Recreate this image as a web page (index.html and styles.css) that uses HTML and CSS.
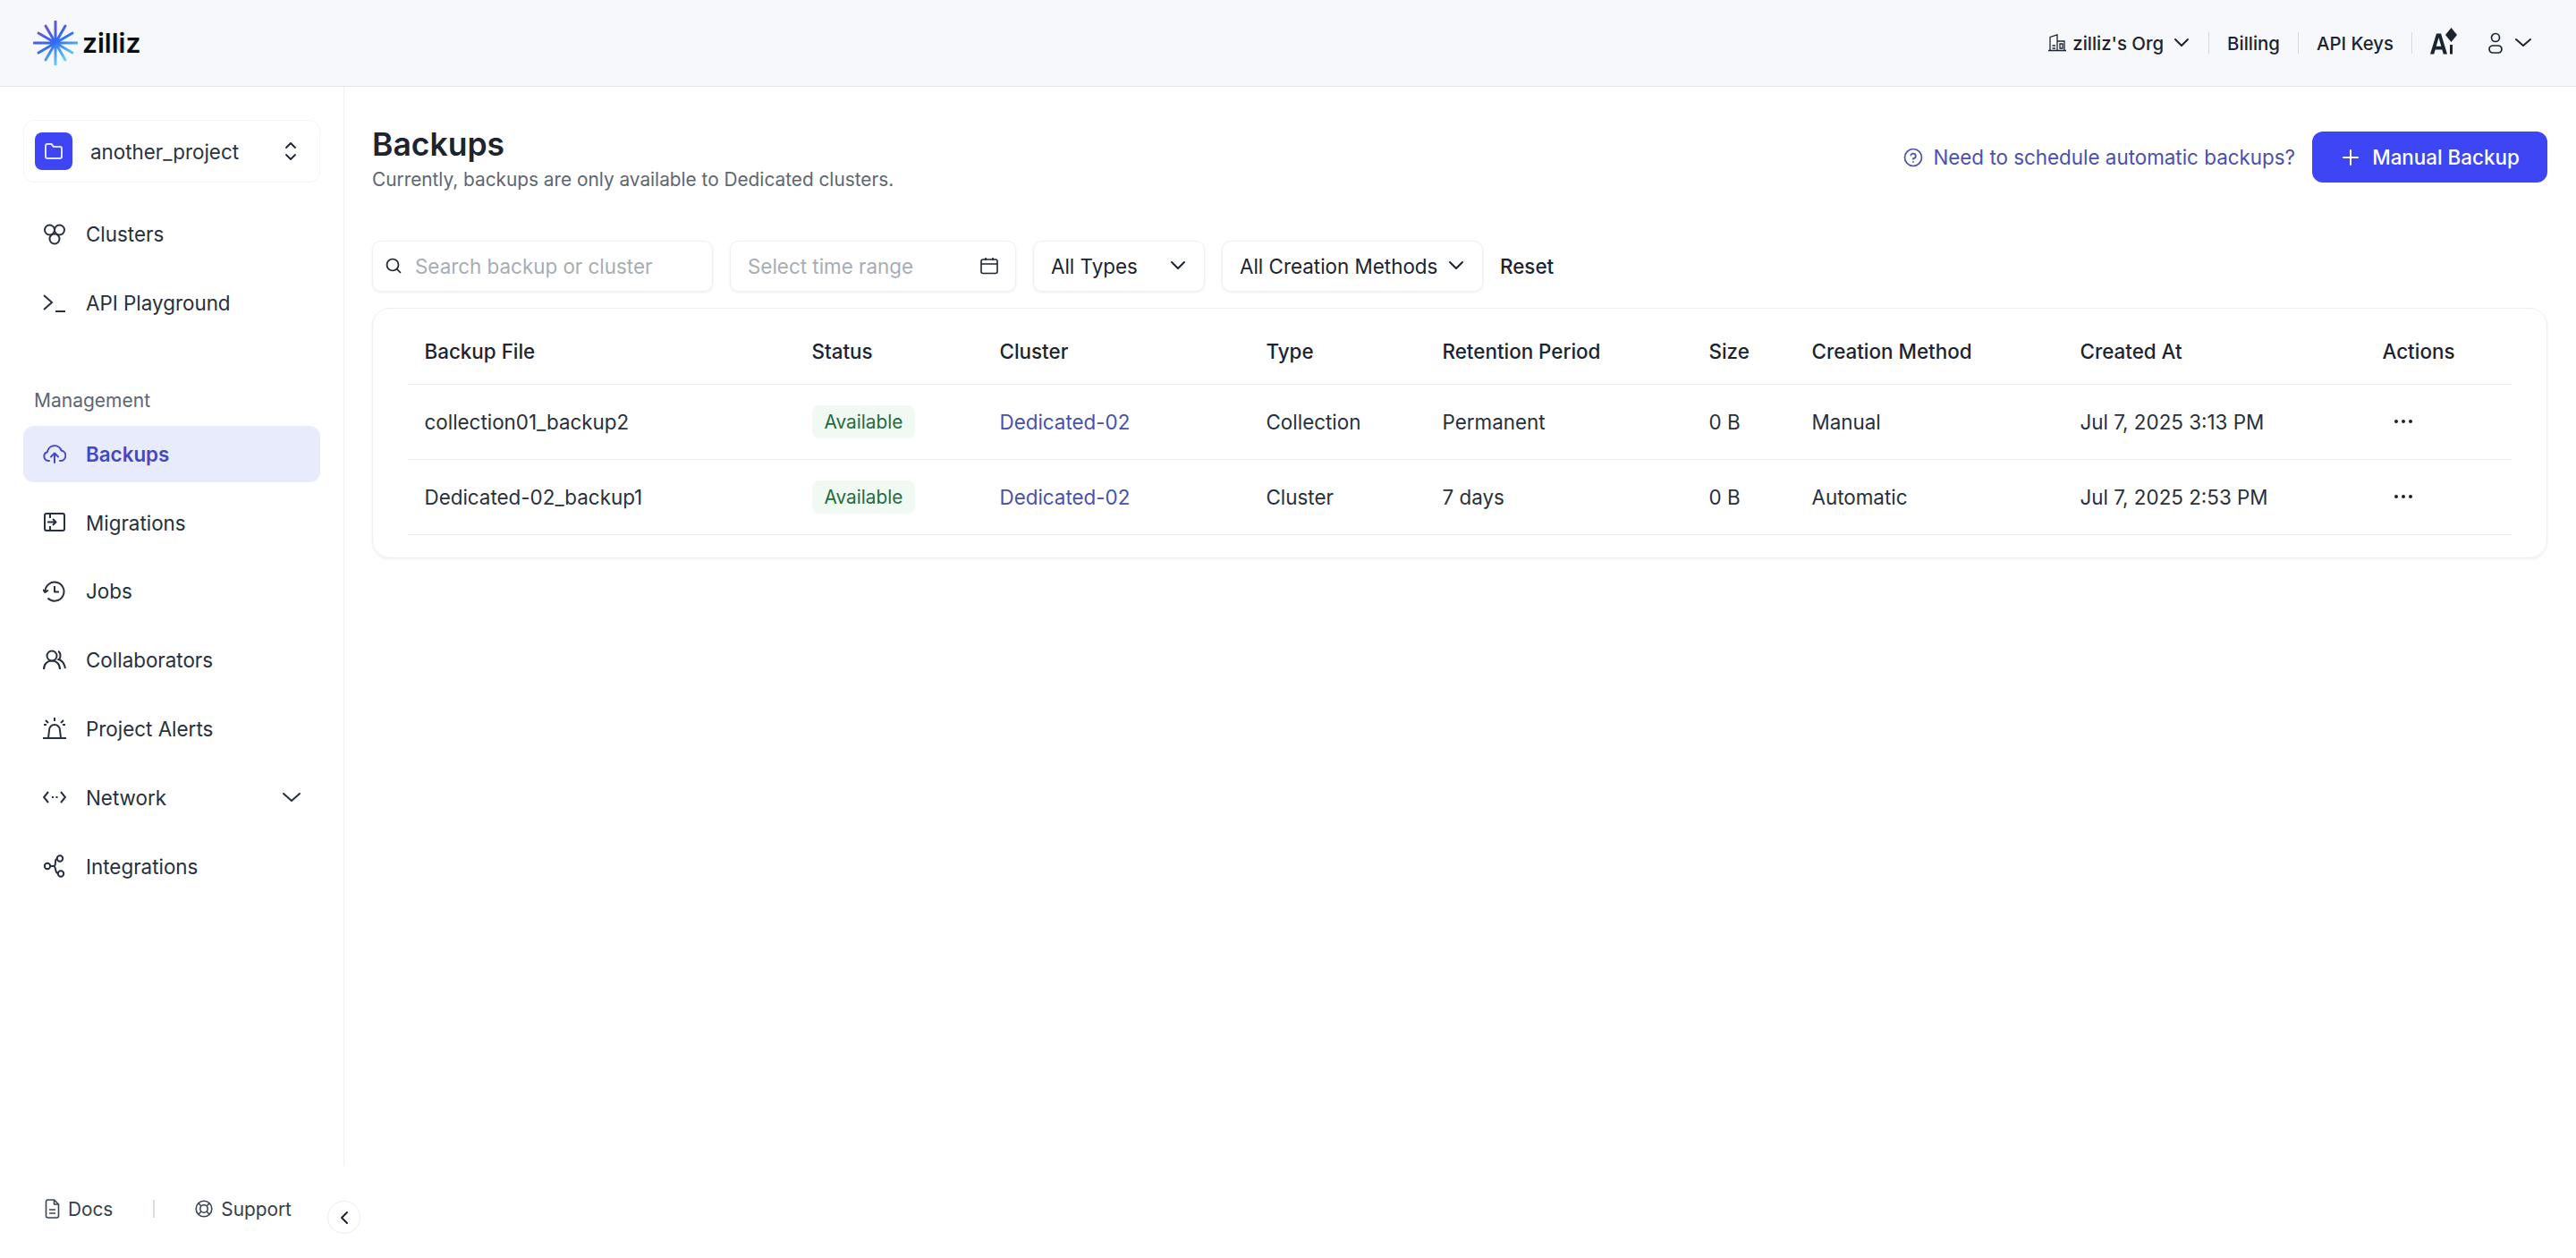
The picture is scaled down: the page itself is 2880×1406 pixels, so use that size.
FILE: index.html
```html
<!DOCTYPE html>
<html lang="en">
  <head>
    <meta charset="UTF-8" />
    <meta name="viewport" content="width=device-width, initial-scale=1.0" />
    <title>Backups</title>
    <link rel="stylesheet" href="styles.css">
  </head>
  <body>
    <svg class="defs" width="0" height="0">
      <defs>
        <linearGradient id="star" gradientUnits="userSpaceOnUse" x1="8" y1="4" x2="34" y2="48">
          <stop offset="0" stop-color="#7a4fc8" />
          <stop offset="0.5" stop-color="#2f6bf5" />
          <stop offset="1" stop-color="#6fdcee" />
        </linearGradient>
      </defs>
    </svg>

    <!-- Top bar -->
    <header class="topbar">
      <div class="logo">
        <svg class="logo-mark" width="50" height="50" viewBox="0 0 50 50" fill="none" stroke="url(#star)" stroke-width="3" stroke-linecap="round">
          <path d="M25 1V49M1 25H49" />
          <path d="M14 6L36 44M36 6L14 44" />
          <path d="M6 14L44 36M44 14L6 36" />
          <circle cx="25" cy="25" r="6" fill="url(#star)" stroke="none" />
        </svg>
        <span class="logo-text">zilliz</span>
      </div>
      <nav class="top-links">
        <a class="top-org">
          <svg width="20" height="20" viewBox="0 0 20 20" fill="none" stroke="#1b2430" stroke-width="1.300"><path d="M0 18.500H20M2 18V3.500L10 1V18M10 8H18V18M4.500 13H8M4.500 16H8M13 11V16H16V11Z" /></svg>
          <span>zilliz's Org</span>
          <svg class="chev" width="20" height="12" viewBox="0 0 20 12" fill="none" stroke="#1b2430" stroke-width="2" stroke-linecap="round" stroke-linejoin="round"><path d="M3 2L10 9L17 2" /></svg>
        </a>
        <i class="top-sep"></i>
        <a>Billing</a>
        <i class="top-sep"></i>
        <a>API Keys</a>
        <i class="top-sep"></i>
        <svg class="ai-icon" width="30" height="30" viewBox="0 0 30 30" fill="#1b2430">
          <path d="M0 29.500L7 6.500H12L19 29.500H14.800L13.300 24.500H5.700L4.200 29.500ZM6.700 20.800H12.300L9.500 11Z" />
          <path d="M23.500 0L30 8L23.500 16L17 8Z" />
          <rect x="22" y="19" width="3" height="10.500" />
        </svg>
        <a class="top-user">
          <svg width="16" height="26" viewBox="0 0 16 26" fill="none" stroke="#1b2430" stroke-width="1.700"><circle cx="8" cy="7" r="4.500" /><rect x="1" y="16" width="14" height="8" rx="4" /></svg>
          <svg class="chev" width="20" height="12" viewBox="0 0 20 12" fill="none" stroke="#1b2430" stroke-width="2" stroke-linecap="round" stroke-linejoin="round"><path d="M2 2L10 9L18 2" /></svg>
        </a>
      </nav>
    </header>

    <div class="layout">
      <!-- Sidebar -->
      <aside class="sidebar">
        <div class="side-body">
          <div class="project">
            <span class="project-icon">
              <svg width="22" height="20" viewBox="0 0 22 20" fill="none" stroke="#dfe3ff" stroke-width="2" stroke-linejoin="round"><path d="M2 4A2 2 0 0 1 4 2H8.500L11 5H18A2 2 0 0 1 20 7V16A2 2 0 0 1 18 18H4A2 2 0 0 1 2 16Z" /></svg>
            </span>
            <span class="project-name">another_project</span>
            <svg width="14" height="22" viewBox="0 0 14 22" fill="none" stroke="#1b2430" stroke-width="1.800" stroke-linecap="round" stroke-linejoin="round"><path d="M2 7L7 2L12 7M2 15L7 20L12 15" /></svg>
          </div>

          <ul class="nav">
            <li class="nav-item">
              <svg class="nav-icon" viewBox="0 0 26 26" fill="none" stroke="currentColor" stroke-width="2"><circle cx="7.500" cy="8" r="5.500" /><circle cx="18.500" cy="8" r="5.500" /><circle cx="13" cy="18" r="5.500" /></svg>
              Clusters
            </li>
            <li class="nav-item">
              <svg class="nav-icon" viewBox="0 0 26 26" fill="none" stroke="currentColor" stroke-width="2"><path d="M1 5L10 13L1 21M14 23H25" /></svg>
              API Playground
            </li>
          </ul>

          <div class="nav-label">Management</div>
          <ul class="nav">
            <li class="nav-item active">
              <svg class="nav-icon" viewBox="0 0 26 26" fill="none" stroke="currentColor" stroke-width="2" stroke-linecap="round" stroke-linejoin="round"><path d="M7 21H6A5 5 0 0 1 5 11.200A8 8 0 0 1 20.500 9.500A5.800 5.800 0 0 1 20 21H19M13 23V13M9 16.500L13 12.500L17 16.500" /></svg>
              Backups
            </li>
            <li class="nav-item">
              <svg class="nav-icon" viewBox="0 0 26 26" fill="none" stroke="currentColor" stroke-width="2" stroke-linejoin="round"><rect x="2" y="3" width="22" height="19" rx="2" /><path d="M8 3V8M8 17V22M5 12.500H14M11 9L14.500 12.500L11 16" /></svg>
              Migrations
            </li>
            <li class="nav-item">
              <svg class="nav-icon" viewBox="0 0 26 26" fill="none" stroke="currentColor" stroke-width="2" stroke-linejoin="round"><path d="M2.500 13A10.500 10.500 0 1 1 5.500 20.500M0 11L2.500 14L6 11.500M13 7V13.500H18" /></svg>
              Jobs
            </li>
            <li class="nav-item">
              <svg class="nav-icon" viewBox="0 0 26 26" fill="none" stroke="currentColor" stroke-width="2"><circle cx="10" cy="8" r="5.500" /><path d="M1 23C1 17 5 13.500 10 13.500S19 17 19 23M17 3C20 4 20.500 10 17.500 12C21 13 24 17 25 22" /></svg>
              Collaborators
            </li>
            <li class="nav-item">
              <svg class="nav-icon" viewBox="0 0 26 26" fill="none" stroke="currentColor" stroke-width="2"><path d="M0 24H26M6 24L7 15A6 6 0 0 1 19 15L20 24M13 1V5M3 4L6 7M23 4L20 7M1 9H4M22 9H25" /></svg>
              Project Alerts
            </li>
            <li class="nav-item">
              <svg class="nav-icon" viewBox="0 0 26 26" fill="none" stroke="currentColor" stroke-width="2"><path d="M6 7L1 13L6 19M20 7L25 13L20 19M10 13H12M14.500 13H16.500" /></svg>
              Network
              <svg class="nav-chev" width="24" height="14" viewBox="0 0 24 14" fill="none" stroke="currentColor" stroke-width="2" stroke-linecap="round" stroke-linejoin="round"><path d="M3 3L12 11L21 3" /></svg>
            </li>
            <li class="nav-item">
              <svg class="nav-icon" viewBox="0 0 26 26" fill="none" stroke="currentColor" stroke-width="2"><circle cx="5" cy="13" r="3.200" /><circle cx="19" cy="4.500" r="3.200" /><circle cx="20" cy="21.500" r="3.200" /><path d="M8 13H12C14 13 14 9 14 8C14 6 15 5 16 5M12 13C14 13 14 17 14.500 18.500C15 20 16 21 17 21" /></svg>
              Integrations
            </li>
          </ul>
        </div>

        <div class="side-foot">
          <a class="foot-link">
            <svg width="17" height="22" viewBox="0 0 17 22" fill="none" stroke="#3a4452" stroke-width="1.600" stroke-linejoin="round"><path d="M1.500 3A2 2 0 0 1 3.500 1H10.500L15.500 6V19A2 2 0 0 1 13.500 21H3.500A2 2 0 0 1 1.500 19ZM10.500 1V6H15.500M5 12H12M5 16H12" /></svg>
            Docs
          </a>
          <i class="foot-sep"></i>
          <a class="foot-link">
            <svg width="20" height="20" viewBox="0 0 20 20" fill="none" stroke="#3a4452" stroke-width="1.600"><circle cx="10" cy="10" r="8.800" /><circle cx="10" cy="10" r="4.200" /><path d="M3.800 3.800L7 7M16.200 3.800L13 7M3.800 16.200L7 13M16.200 16.200L13 13" /></svg>
            Support
          </a>
        </div>
        <button class="collapse">
          <svg width="10" height="16" viewBox="0 0 10 16" fill="none" stroke="#1b2430" stroke-width="2" stroke-linecap="round" stroke-linejoin="round"><path d="M8 2L2 8L8 14" /></svg>
        </button>
      </aside>

      <!-- Main content -->
      <main class="main">
        <div class="page-head">
          <div>
            <h1>Backups</h1>
            <p>Currently, backups are only available to Dedicated clusters.</p>
          </div>
          <div class="head-actions">
            <a class="help-link">
              <svg width="22" height="22" viewBox="0 0 22 22" fill="none" stroke="#4a4fb0" stroke-width="1.700" stroke-linecap="round"><circle cx="11" cy="11" r="9.500" /><path d="M8.300 8.600A2.800 2.800 0 1 1 11 12.200V12.800M11 15.800V16" /></svg>
              Need to schedule automatic backups?
            </a>
            <button class="primary-btn">
              <svg width="18" height="18" viewBox="0 0 18 18" fill="none" stroke="#fff" stroke-width="2" stroke-linecap="round"><path d="M9 1V17M1 9H17" /></svg>
              Manual Backup
            </button>
          </div>
        </div>

        <div class="filters">
          <div class="field field-search">
            <svg width="18" height="18" viewBox="0 0 18 18" fill="none" stroke="#1b2430" stroke-width="1.700" stroke-linecap="round"><circle cx="8" cy="8" r="6.500" /><path d="M13 13L16.500 16.500" /></svg>
            <span class="placeholder">Search backup or cluster</span>
          </div>
          <div class="field field-date">
            <span class="placeholder">Select time range</span>
            <svg width="20" height="20" viewBox="0 0 20 20" fill="none" stroke="#1b2430" stroke-width="1.600"><rect x="1" y="3" width="18" height="15.500" rx="2" /><path d="M1 8H19M6 1V4M14 1V4" /></svg>
          </div>
          <div class="field field-types">
            <span>All Types</span>
            <svg class="chev" width="20" height="12" viewBox="0 0 20 12" fill="none" stroke="#1b2430" stroke-width="2" stroke-linecap="round" stroke-linejoin="round"><path d="M3 2L10 9L17 2" /></svg>
          </div>
          <div class="field field-methods">
            <span>All Creation Methods</span>
            <svg class="chev" width="20" height="12" viewBox="0 0 20 12" fill="none" stroke="#1b2430" stroke-width="2" stroke-linecap="round" stroke-linejoin="round"><path d="M3 2L10 9L17 2" /></svg>
          </div>
          <a class="reset">Reset</a>
        </div>

        <div class="table-card">
          <table>
            <colgroup>
              <col class="col-file" /><col class="col-status" /><col class="col-cluster" />
              <col class="col-type" /><col class="col-retention" /><col class="col-size" />
              <col class="col-method" /><col class="col-created" /><col class="col-actions" />
            </colgroup>
            <thead>
              <tr>
                <th>Backup File</th><th>Status</th><th>Cluster</th><th>Type</th><th>Retention Period</th>
                <th>Size</th><th>Creation Method</th><th>Created At</th><th>Actions</th>
              </tr>
            </thead>
            <tbody>
              <tr>
                <td>collection01_backup2</td>
                <td><span class="badge">Available</span></td>
                <td><a class="link">Dedicated-02</a></td>
                <td>Collection</td>
                <td>Permanent</td>
                <td>0 B</td>
                <td>Manual</td>
                <td>Jul 7, 2025 3:13 PM</td>
                <td><span class="more"><i></i><i></i><i></i></span></td>
              </tr>
              <tr>
                <td>Dedicated-02_backup1</td>
                <td><span class="badge">Available</span></td>
                <td><a class="link">Dedicated-02</a></td>
                <td>Cluster</td>
                <td>7 days</td>
                <td>0 B</td>
                <td>Automatic</td>
                <td>Jul 7, 2025 2:53 PM</td>
                <td><span class="more"><i></i><i></i><i></i></span></td>
              </tr>
            </tbody>
          </table>
        </div>
      </main>
    </div>
  </body>
</html>
```

FILE: styles.css
```css
* {
  box-sizing: border-box;
}

html,
body {
  height: 100%;
}

body {
  margin: 0;
  font-family: Inter, "Noto Sans", sans-serif;
  font-size: 22.400px;
  color: #1b2430;
  background-color: #fff;
  display: flex;
  flex-direction: column;
  overflow: hidden;
}

.defs {
  position: absolute;
}

/* Top bar */
.topbar {
  height: 97px;
  flex: none;
  background-color: #f6f8fc;
  border-bottom: 1px solid #e3e6ea;
  display: flex;
  align-items: center;
  justify-content: space-between;
  padding: 0 49px 0 37px;
}

.logo {
  display: flex;
  align-items: center;
  gap: 5px;
}

.logo-text {
  font-size: 30px;
  font-weight: 600;
  color: #0b0f14;
  line-height: 1;
}

.top-links {
  display: flex;
  align-items: center;
  font-size: 20.400px;
  font-weight: 500;
}

.top-org {
  display: flex;
  align-items: center;
  gap: 7px;
}

.top-org .chev {
  margin-left: 3px;
}

.top-sep {
  width: 1px;
  height: 24px;
  background-color: #d6dade;
  margin: 0 20px;
}

.ai-icon {
  margin-bottom: 5px;
}

.top-user {
  display: flex;
  align-items: center;
  gap: 13px;
  margin-left: 35px;
}

/* Sidebar */
.layout {
  flex: 1;
  display: flex;
  min-height: 0;
}

.sidebar {
  position: relative;
  flex: none;
  width: 385px;
  display: flex;
  flex-direction: column;
}

.side-body {
  flex: 1;
  border-right: 1px solid #f0f1f3;
  padding: 37px 26px 0;
}

.project {
  width: 332px;
  height: 70px;
  border: 1px solid #f3f4f6;
  border-radius: 12px;
  display: flex;
  align-items: center;
  padding: 0 25px 0 12px;
  margin-bottom: 26px;
}

.project-icon {
  width: 42px;
  height: 42px;
  border-radius: 8px;
  background-color: #3e45f5;
  display: flex;
  align-items: center;
  justify-content: center;
}

.project-name {
  flex: 1;
  margin-left: 20px;
  color: #2a3340;
}

.nav {
  list-style: none;
  margin: 0;
  padding: 0;
  width: 332px;
  display: flex;
  flex-direction: column;
  gap: 13.800px;
}

.nav-item {
  height: 63px;
  border-radius: 12px;
  display: flex;
  align-items: center;
  gap: 22px;
  padding: 0 20px 0 22px;
  color: #27303c;
}

.nav-icon {
  width: 26px;
  height: 26px;
  flex: none;
}

.nav-chev {
  margin-left: auto;
}

.nav-item.active {
  background-color: #e8ebfb;
  color: #4448c4;
  font-weight: 600;
}

.nav-label {
  font-size: 21px;
  color: #5d6672;
  margin: 63px 0 13px 12px;
  line-height: 30px;
}

.side-foot {
  flex: none;
  height: 103px;
  padding: 0 0 7px 50px;
  display: flex;
  align-items: center;
  font-size: 20.800px;
  color: #333d4a;
}

.foot-link {
  display: flex;
  align-items: center;
  gap: 9px;
}

.foot-sep {
  width: 2px;
  height: 20px;
  background-color: #d5dbe2;
  margin: 0 45px;
}

.collapse {
  position: absolute;
  right: -18px;
  bottom: 27px;
  width: 37px;
  height: 37px;
  border-radius: 50%;
  border: 1px solid #ebedf0;
  background-color: #fff;
  display: flex;
  align-items: center;
  justify-content: center;
  padding: 0;
}

/* Main */
.main {
  flex: 1;
  min-width: 0;
  padding: 40px 32px 0 31px;
}

.page-head {
  display: flex;
  align-items: flex-start;
  justify-content: space-between;
  height: 131px;
}

h1 {
  margin: 2px 0 1px;
  font-size: 35.500px;
  font-weight: 600;
  line-height: 46px;
}

.page-head p {
  margin: 0;
  font-size: 20.800px;
  line-height: 30px;
  color: #5d6672;
}

.head-actions {
  display: flex;
  align-items: center;
  gap: 19px;
  margin-top: 10px;
}

.help-link {
  display: flex;
  align-items: center;
  gap: 11px;
  color: #4a4fb0;
}

.primary-btn {
  width: 263px;
  height: 57px;
  border: none;
  border-radius: 12px;
  background-color: #3e45f5;
  color: #fff;
  font: inherit;
  font-weight: 500;
  display: flex;
  align-items: center;
  justify-content: center;
  gap: 15px;
  padding: 0 0 0 3px;
}

.filters {
  display: flex;
  align-items: center;
  gap: 19px;
  height: 58px;
  margin-bottom: 18px;
}

.field {
  height: 57px;
  border: 1px solid #eef0f2;
  border-radius: 10px;
  box-shadow: 0 1px 3px rgba(20, 30, 50, 0.08);
  display: flex;
  align-items: center;
  justify-content: space-between;
  padding: 0 19px;
  flex: none;
  white-space: nowrap;
}

.field-search {
  width: 381px;
  justify-content: flex-start;
  gap: 15px;
  padding-left: 14px;
}

.field-date {
  width: 320px;
}

.field-types {
  width: 192px;
}

.field-methods {
  width: 292px;
}

.placeholder {
  color: #a7adb5;
}

.reset {
  font-weight: 500;
}

.table-card {
  border: 1px solid #eef0f2;
  border-radius: 20px;
  box-shadow: 0 1px 3px rgba(20, 30, 50, 0.08);
  padding: 11px 39px 25px;
}

table {
  width: 100%;
  border-collapse: collapse;
  table-layout: fixed;
}

th,
td {
  padding: 0 0 0 18.500px;
  text-align: left;
  border-bottom: 1px solid #e9ebee;
}

th {
  height: 73px;
  font-weight: 500;
}

td {
  height: 84px;
  color: #27303c;
}

.col-file {
  width: 433px;
}

.col-status {
  width: 210px;
}

.col-cluster {
  width: 298px;
}

.col-type {
  width: 197px;
}

.col-retention {
  width: 298px;
}

.col-size {
  width: 115px;
}

.col-method {
  width: 300px;
}

.col-created {
  width: 338px;
}

.col-actions {
  width: 163px;
}

.badge {
  display: inline-block;
  padding: 0 14px;
  height: 37px;
  line-height: 37px;
  border-radius: 8px;
  background-color: #f0faf3;
  color: #256a40;
  font-size: 20.800px;
}

.link {
  color: #4a4fb0;
}

.more {
  display: flex;
  gap: 4px;
  margin-left: 13px;
}

.more i {
  width: 4px;
  height: 4px;
  border-radius: 50%;
  background-color: #1b2430;
}
```
